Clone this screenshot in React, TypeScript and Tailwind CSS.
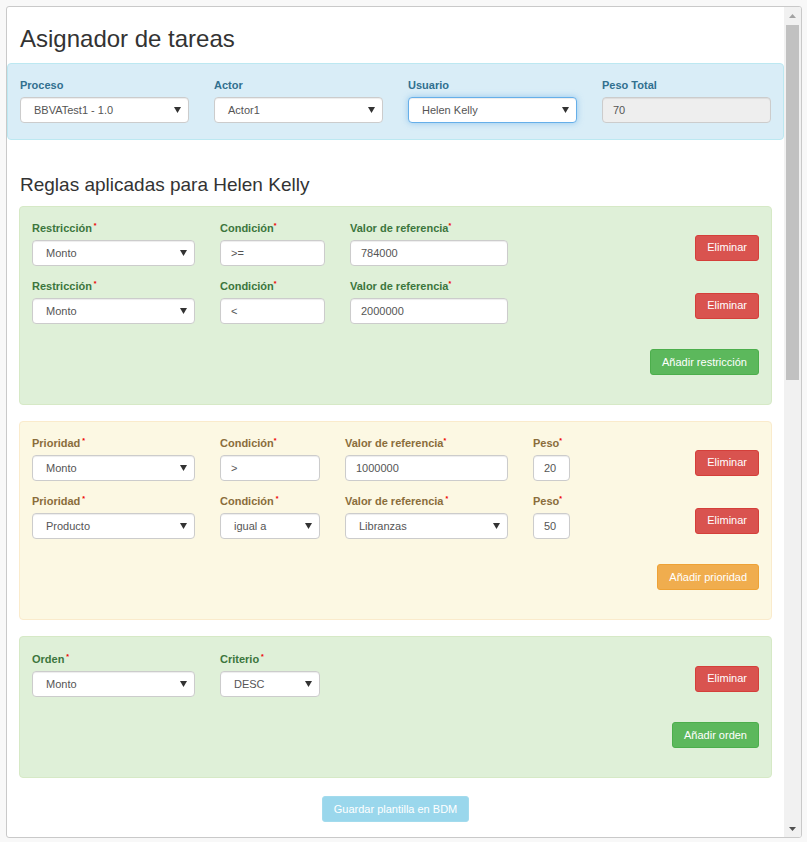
import React from 'react';

type Tone = 'green' | 'yellow';

interface FieldDef {
  label: string;
  spaced?: boolean;
  kind: 'select' | 'input';
  width: string;
  value: string;
}

const TONES: Record<Tone, { panel: string; label: string }> = {
  green: {
    panel: 'bg-[#dff0d8] border-[#d6e9c6]',
    label: 'text-[#3c763d]',
  },
  yellow: {
    panel: 'bg-[#fcf8e3] border-[#faebcc]',
    label: 'text-[#8a6d3b]',
  },
};

const Arrow = () => (
  <svg width="7" height="6" viewBox="0 0 7 6" className="shrink-0">
    <path d="M0 0 H7 L3.5 6 Z" fill="#333" />
  </svg>
);

function Control({
  kind,
  width,
  value,
  focused = false,
  disabled = false,
}: {
  kind: 'select' | 'input';
  width: string;
  value: string;
  focused?: boolean;
  disabled?: boolean;
}) {
  const border = focused
    ? 'border-[#66afe9] shadow-[inset_0_1px_1px_rgba(0,0,0,0.075),0_0_6px_rgba(102,175,233,0.6)]'
    : 'border-[#ccc] shadow-[inset_0_1px_1px_rgba(0,0,0,0.075)]';
  const bg = disabled ? 'bg-[#eee]' : 'bg-white';

  if (kind === 'select') {
    return (
      <div
        className={`${width} h-[26px] flex items-center justify-between pl-[13px] pr-[7px] border rounded-[4px] text-[11px] text-[#555] ${border} ${bg}`}
      >
        <span>{value}</span>
        <Arrow />
      </div>
    );
  }
  return (
    <div
      className={`${width} h-[26px] flex items-center pl-[10px] border rounded-[4px] text-[11px] text-[#555] ${border} ${bg}`}
    >
      {value}
    </div>
  );
}

function Label({
  text,
  color,
  required,
  spaced,
}: {
  text: string;
  color: string;
  required?: boolean;
  spaced?: boolean;
}) {
  return (
    <div className={`text-[11px] font-bold leading-[13px] mb-[5px] ${color}`}>
      {text}
      {required && (
        <span className="text-[#e00] text-[7px] leading-none align-top">
          {spaced ? ' *' : '*'}
        </span>
      )}
    </div>
  );
}

function Button({ text, color }: { text: string; color: string }) {
  return (
    <button
      className={`h-[26px] px-[11px] rounded-[3px] border text-[11px] text-white leading-none ${color}`}
    >
      {text}
    </button>
  );
}

const RED = 'bg-[#d9534f] border-[#d43f3a]';
const GREEN = 'bg-[#5cb85c] border-[#4cae4c]';
const ORANGE = 'bg-[#f0ad4e] border-[#eea236]';

function RulePanel({
  tone,
  rows,
  addLabel,
  addColor,
  top = 'pt-[15px]',
}: {
  tone: Tone;
  rows: FieldDef[][];
  addLabel: string;
  addColor: string;
  top?: string;
}) {
  const t = TONES[tone];
  return (
    <div className={`border rounded-[4px] ${top} pb-[29px] px-[12px] ${t.panel}`}>
      <div className="flex flex-col gap-[14px]">
        {rows.map((row, i) => (
          <div key={i} className="flex items-start">
            <div className="flex gap-[25px]">
              {row.map((f, j) => (
                <div key={j}>
                  <Label text={f.label} color={t.label} required spaced={f.spaced} />
                  <Control kind={f.kind} width={f.width} value={f.value} />
                </div>
              ))}
            </div>
            <div className="ml-auto mt-[12px]">
              <Button text="Eliminar" color={RED} />
            </div>
          </div>
        ))}
      </div>
      <div className="flex justify-end mt-[25px]">
        <Button text={addLabel} color={addColor} />
      </div>
    </div>
  );
}

const restricciones: FieldDef[][] = [
  [
    { label: 'Restricción', spaced: true, kind: 'select', width: 'w-[163px]', value: 'Monto' },
    { label: 'Condición', kind: 'input', width: 'w-[105px]', value: '>=' },
    { label: 'Valor de referencia', kind: 'input', width: 'w-[158px]', value: '784000' },
  ],
  [
    { label: 'Restricción', spaced: true, kind: 'select', width: 'w-[163px]', value: 'Monto' },
    { label: 'Condición', kind: 'input', width: 'w-[105px]', value: '<' },
    { label: 'Valor de referencia', kind: 'input', width: 'w-[158px]', value: '2000000' },
  ],
];

const prioridades: FieldDef[][] = [
  [
    { label: 'Prioridad', spaced: true, kind: 'select', width: 'w-[163px]', value: 'Monto' },
    { label: 'Condición', kind: 'input', width: 'w-[100px]', value: '>' },
    { label: 'Valor de referencia', kind: 'input', width: 'w-[163px]', value: '1000000' },
    { label: 'Peso', kind: 'input', width: 'w-[37px]', value: '20' },
  ],
  [
    { label: 'Prioridad', spaced: true, kind: 'select', width: 'w-[163px]', value: 'Producto' },
    { label: 'Condición', spaced: true, kind: 'select', width: 'w-[100px]', value: 'igual a' },
    { label: 'Valor de referencia', spaced: true, kind: 'select', width: 'w-[163px]', value: 'Libranzas' },
    { label: 'Peso', kind: 'input', width: 'w-[37px]', value: '50' },
  ],
];

const ordenes: FieldDef[][] = [
  [
    { label: 'Orden', spaced: true, kind: 'select', width: 'w-[163px]', value: 'Monto' },
    { label: 'Criterio', spaced: true, kind: 'select', width: 'w-[100px]', value: 'DESC' },
  ],
];

export default function App() {
  return (
    <div className="min-h-screen bg-[#f8f8f8] pt-[6px] pl-[6px] font-['Liberation_Sans',Arial,sans-serif]">
      <div className="w-[796px] h-[832px] border border-[#c9c9c9] rounded-[3px] bg-white flex overflow-hidden">
        {/* Content */}
        <div className="w-[777px] shrink-0">
          <h1 className="pt-[19px] pl-[13px] text-[24px] leading-[26px] text-[#333]">
            Asignador de tareas
          </h1>

          {/* Selector panel */}
          <div className="mt-[11px] border border-[#bce8f1] bg-[#d9edf7] rounded-[4px] pt-[15px] pb-[16px] pl-[12px]">
            <div className="flex gap-[25px]">
              <div>
                <Label text="Proceso" color="text-[#31708f]" />
                <Control kind="select" width="w-[169px]" value="BBVATest1 - 1.0" />
              </div>
              <div>
                <Label text="Actor" color="text-[#31708f]" />
                <Control kind="select" width="w-[169px]" value="Actor1" />
              </div>
              <div>
                <Label text="Usuario" color="text-[#31708f]" />
                <Control kind="select" width="w-[169px]" value="Helen Kelly" focused />
              </div>
              <div>
                <Label text="Peso Total" color="text-[#31708f]" />
                <Control kind="input" width="w-[169px]" value="70" disabled />
              </div>
            </div>
          </div>

          <h2 className="mt-[34px] pl-[13px] text-[19px] leading-[21px] text-[#333]">
            Reglas aplicadas para Helen Kelly
          </h2>

          <div className="mt-[11px] px-[12px] flex flex-col gap-[16px]">
            <RulePanel tone="green" rows={restricciones} addLabel="Añadir restricción" addColor={GREEN} />
            <RulePanel tone="yellow" rows={prioridades} addLabel="Añadir prioridad" addColor={ORANGE} />
            <RulePanel tone="green" rows={ordenes} addLabel="Añadir orden" addColor={GREEN} top="pt-[16px]" />
          </div>

          <div className="flex justify-center mt-[18px]">
            <button className="h-[26px] px-[11px] rounded-[3px] border border-[#a3dbed] bg-[#9ad7ec] text-[11px] text-white leading-none">
              Guardar plantilla en BDM
            </button>
          </div>
        </div>

        {/* Scrollbar */}
        <div className="w-[17px] bg-[#f1f1f1] flex flex-col items-center">
          <div className="h-[17px] flex items-center justify-center">
            <svg width="7" height="4" viewBox="0 0 7 4">
              <path d="M0 4 L3.5 0 L7 4 Z" fill="#a3a3a3" />
            </svg>
          </div>
          <div className="mt-[1px] w-[13px] h-[355px] bg-[#c1c1c1]" />
          <div className="mt-auto h-[17px] flex items-center justify-center">
            <svg width="7" height="4" viewBox="0 0 7 4">
              <path d="M0 0 L7 0 L3.5 4 Z" fill="#505050" />
            </svg>
          </div>
        </div>
      </div>
    </div>
  );
}
